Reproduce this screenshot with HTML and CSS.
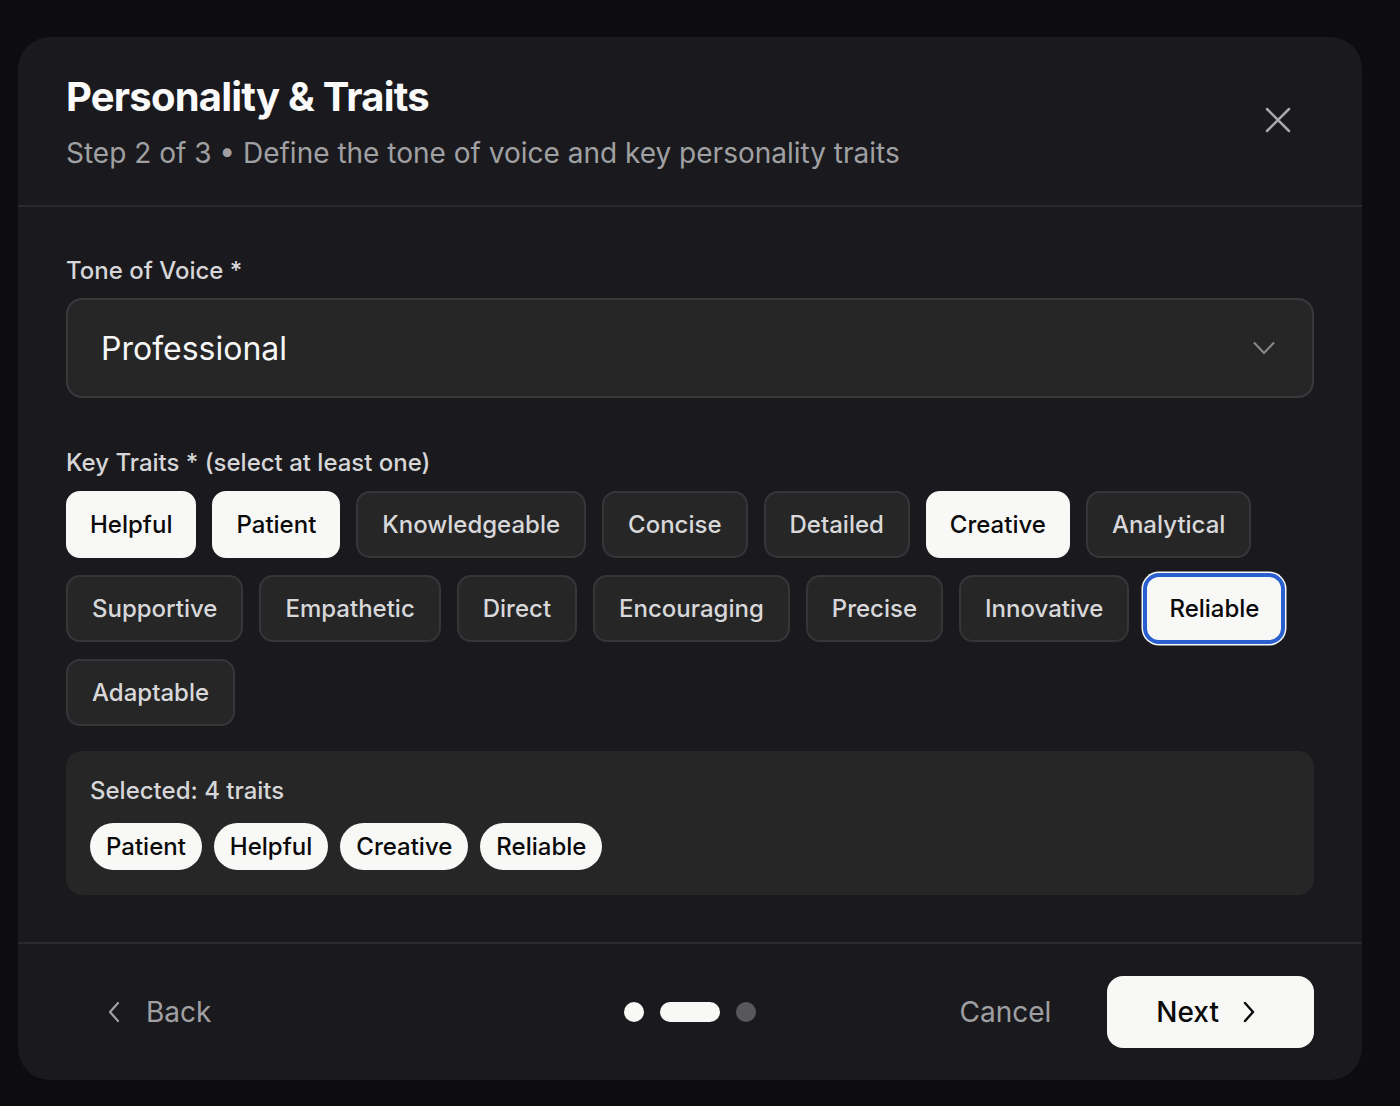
FILE: index.html
```html
<!DOCTYPE html>
<html>
    <head>
        <link rel="stylesheet" href="styles.css">
    </head>
    <body>
        <div class="modal">
            <div class="modal-header">
                <div class="titles">
                    <h1>Personality &amp; Traits</h1>
                    <p class="subtitle">Step 2 of 3 • Define the tone of voice and key personality traits</p>
                </div>
                <button class="close">
                    <svg width="28" height="28" viewBox="0 0 28 28" fill="none" stroke="currentColor" stroke-width="2.5" stroke-linecap="round">
                        <path d="M3 3L25 25M25 3L3 25" />
                    </svg>
                </button>
            </div>
            <div class="modal-body">
                <label class="field-label">Tone of Voice *</label>
                <div class="select">
                    <span>Professional</span>
                    <svg width="22" height="14" viewBox="0 0 22 14" fill="none" stroke="currentColor" stroke-width="2" stroke-linecap="round" stroke-linejoin="round">
                        <path d="M1.5 2L11 12L20.5 2" />
                    </svg>
                </div>

                <label class="field-label traits-label">Key Traits * (select at least one)</label>
                <div class="chips">
                    <button class="chip on">Helpful</button>
                    <button class="chip on">Patient</button>
                    <button class="chip">Knowledgeable</button>
                    <button class="chip">Concise</button>
                    <button class="chip">Detailed</button>
                    <button class="chip on">Creative</button>
                    <button class="chip">Analytical</button>
                    <button class="chip">Supportive</button>
                    <button class="chip">Empathetic</button>
                    <button class="chip">Direct</button>
                    <button class="chip">Encouraging</button>
                    <button class="chip">Precise</button>
                    <button class="chip">Innovative</button>
                    <button class="chip on focus">Reliable</button>
                    <button class="chip">Adaptable</button>
                </div>

                <div class="selected">
                    <div class="selected-title">Selected: 4 traits</div>
                    <div class="pills">
                        <span class="pill">Patient</span>
                        <span class="pill">Helpful</span>
                        <span class="pill">Creative</span>
                        <span class="pill">Reliable</span>
                    </div>
                </div>
            </div>
            <div class="modal-footer">
                <button class="ghost back">
                    <svg width="24" height="24" viewBox="0 0 24 24" fill="none" stroke="currentColor" stroke-width="2.2" stroke-linecap="round" stroke-linejoin="round">
                        <path d="M16 3L8 12L16 21" />
                    </svg>
                    Back
                </button>
                <div class="dots">
                    <span class="dot done"></span>
                    <span class="dot current"></span>
                    <span class="dot"></span>
                </div>
                <div class="actions">
                    <button class="ghost">Cancel</button>
                    <button class="primary">
                        Next
                        <svg width="24" height="24" viewBox="0 0 24 24" fill="none" stroke="currentColor" stroke-width="2.4" stroke-linecap="round" stroke-linejoin="round">
                            <path d="M8 3L16 12L8 21" />
                        </svg>
                    </button>
                </div>
            </div>
        </div>
    </body>
</html>
```

FILE: styles.css
```css
body {
    margin: 0;
    background: #0d0d10;
    font-family: Inter, "Noto Sans", sans-serif;
    color: #fafafa;
}
button {
    font-family: inherit;
    border: none;
    background: none;
    cursor: pointer;
    padding: 0;
}
.modal {
    margin: 37px 0 0 18px;
    width: 1344px;
    height: 1043px;
    box-sizing: border-box;
    background: #1a1a1e;
    border-radius: 32px;
    display: flex;
    flex-direction: column;
}
.modal-header {
    display: flex;
    justify-content: space-between;
    align-items: center;
    padding: 32px 48px 32px;
    border-bottom: 2px solid #2a2a2d;
}
h1 {
    margin: 0;
    font-size: 40px;
    line-height: 56px;
    font-weight: 700;
    letter-spacing: -0.02em;
}
.subtitle {
    margin: 8px 0 0;
    font-size: 28px;
    line-height: 40px;
    color: #a0a0a3;
}
.close {
    color: #a8a8ab;
    margin-right: 22px;
    margin-top: -2px;
    display: flex;
}
.modal-body {
    flex: 1;
    padding: 48px 48px 0;
    display: flex;
    flex-direction: column;
}
.field-label {
    font-size: 24px;
    line-height: 32px;
    font-weight: 500;
    color: #d6d6d8;
    margin-bottom: 11px;
}
.select {
    height: 100px;
    box-sizing: border-box;
    border: 2px solid #3a3a3c;
    background: #262627;
    border-radius: 16px;
    padding: 0 37px 0 33px;
    display: flex;
    align-items: center;
    justify-content: space-between;
    font-size: 32px;
    color: #f7f7f7;
}
.select svg {
    color: #8a8a8c;
}
.traits-label {
    margin-top: 49px;
    margin-bottom: 12px;
}
.chips {
    display: flex;
    flex-wrap: wrap;
    gap: 17px 16px;
}
.chip {
    font-size: 24px;
    line-height: 31px;
    font-weight: 500;
    padding: 16px 24px;
    border: 2px solid #363638;
    background: #262627;
    color: #d8d8da;
    border-radius: 14px;
}
.chip.on {
    padding: 16px 22px;
    background: #f8f8f6;
    border-color: #f8f8f6;
    color: #0a0a0a;
}
.chip.focus {
    border-color: #2a5fcf;
    box-shadow: 0 0 0 2px #2a5fcf, 0 0 0 3.5px #f8f8f6;
}
.selected {
    margin-top: 25px;
    background: #262627;
    border-radius: 16px;
    padding: 24px 24px 25px;
}
.selected-title {
    font-size: 24px;
    line-height: 32px;
    font-weight: 500;
    color: #d6d6d8;
}
.pills {
    display: flex;
    gap: 12px;
    margin-top: 16px;
}
.pill {
    background: #f8f8f6;
    color: #0a0a0a;
    font-size: 24px;
    line-height: 31px;
    font-weight: 500;
    padding: 8px 16px;
    border-radius: 999px;
}
.modal-footer {
    border-top: 2px solid #2a2a2d;
    padding: 32px 48px;
    display: grid;
    grid-template-columns: 1fr auto 1fr;
    align-items: center;
}
.ghost {
    font-size: 28px;
    line-height: 40px;
    color: #a0a0a3;
    padding: 16px 32px;
    display: flex;
    align-items: center;
    gap: 20px;
}
.back {
    justify-self: start;
    padding-left: 36px;
}
.dots {
    display: flex;
    align-items: center;
    gap: 16px;
}
.dot {
    width: 20px;
    height: 20px;
    border-radius: 10px;
    background: #58585b;
}
.dot.done {
    background: #f8f8f6;
}
.dot.current {
    width: 60px;
    background: #f8f8f6;
}
.actions {
    justify-self: end;
    display: flex;
    align-items: center;
    gap: 24px;
}
.primary {
    height: 72px;
    padding: 0 53px 0 49px;
    border-radius: 16px;
    background: #f8f8f6;
    color: #0a0a0a;
    font-size: 28px;
    font-weight: 500;
    display: flex;
    align-items: center;
    gap: 18px;
}
```
